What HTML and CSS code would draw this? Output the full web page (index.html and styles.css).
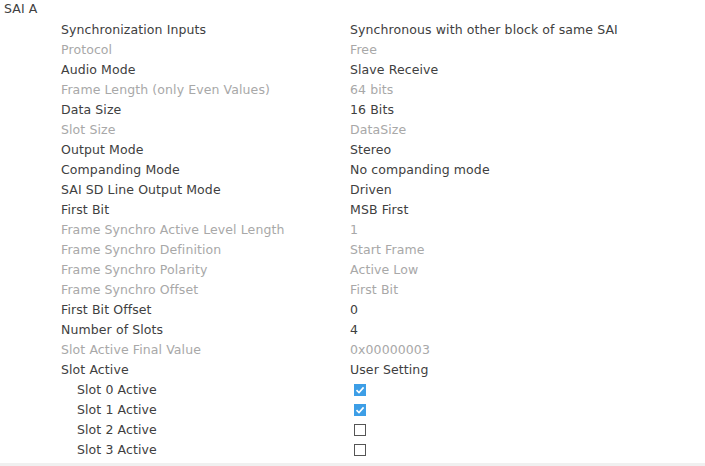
FILE: index.html
```html
<!DOCTYPE html>
<html>
<head>
<meta charset="utf-8">
<link rel="stylesheet" href="styles.css">
</head>
<body>
<div class="panel">
  <div class="group">SAI A</div>
  <div class="rows">
    <div class="row"><span class="label">Synchronization Inputs</span><span class="value">Synchronous with other block of same SAI</span></div>
    <div class="row off"><span class="label">Protocol</span><span class="value">Free</span></div>
    <div class="row"><span class="label">Audio Mode</span><span class="value">Slave Receive</span></div>
    <div class="row off"><span class="label">Frame Length (only Even Values)</span><span class="value">64 bits</span></div>
    <div class="row"><span class="label">Data Size</span><span class="value">16 Bits</span></div>
    <div class="row off"><span class="label">Slot Size</span><span class="value">DataSize</span></div>
    <div class="row"><span class="label">Output Mode</span><span class="value">Stereo</span></div>
    <div class="row"><span class="label">Companding Mode</span><span class="value">No companding mode</span></div>
    <div class="row"><span class="label">SAI SD Line Output Mode</span><span class="value">Driven</span></div>
    <div class="row"><span class="label">First Bit</span><span class="value">MSB First</span></div>
    <div class="row off"><span class="label">Frame Synchro Active Level Length</span><span class="value">1</span></div>
    <div class="row off"><span class="label">Frame Synchro Definition</span><span class="value">Start Frame</span></div>
    <div class="row off"><span class="label">Frame Synchro Polarity</span><span class="value">Active Low</span></div>
    <div class="row off"><span class="label">Frame Synchro Offset</span><span class="value">First Bit</span></div>
    <div class="row"><span class="label">First Bit Offset</span><span class="value">0</span></div>
    <div class="row"><span class="label">Number of Slots</span><span class="value">4</span></div>
    <div class="row off"><span class="label">Slot Active Final Value</span><span class="value">0x00000003</span></div>
    <div class="row"><span class="label">Slot Active</span><span class="value">User Setting</span></div>
    <div class="row sub"><span class="label">Slot 0 Active</span><span class="value"><span class="check on"><svg viewBox="0 0 12 12" width="12" height="12"><path d="M2.5 6.2 L5 8.6 L9.6 3.4" fill="none" stroke="#fff" stroke-width="1.6"/></svg></span></span></div>
    <div class="row sub"><span class="label">Slot 1 Active</span><span class="value"><span class="check on"><svg viewBox="0 0 12 12" width="12" height="12"><path d="M2.5 6.2 L5 8.6 L9.6 3.4" fill="none" stroke="#fff" stroke-width="1.6"/></svg></span></span></div>
    <div class="row sub"><span class="label">Slot 2 Active</span><span class="value"><span class="check"></span></span></div>
    <div class="row sub"><span class="label">Slot 3 Active</span><span class="value"><span class="check"></span></span></div>
  </div>
  <div class="foot"></div>
</div>
</body>
</html>
```
FILE: styles.css
```css
html, body {
  margin: 0;
  padding: 0;
  background: #fff;
}
body {
  font-family: "DejaVu Sans", sans-serif;
  font-size: 12.5px;
  letter-spacing: 0.1px;
  color: #404040;
}
.panel {
  width: 705px;
  height: 466px;
  display: flex;
  flex-direction: column;
}
.group {
  height: 20px;
  line-height: 18px;
  padding-left: 4px;
}
.rows {
  display: flex;
  flex-direction: column;
}
.row {
  display: grid;
  grid-template-columns: 289px 1fr;
  height: 20px;
  line-height: 20px;
  padding-left: 61px;
}
.row.sub {
  padding-left: 77px;
  grid-template-columns: 273px 1fr;
}
.row.off {
  color: #a8a8a8;
}
.value {
  display: flex;
  align-items: center;
}
.check {
  box-sizing: border-box;
  width: 12px;
  height: 12px;
  border: 1px solid #555;
  margin-left: 4px;
  display: flex;
  align-items: center;
  justify-content: center;
  background: #fff;
}
.check.on {
  border: none;
  background: #3d9ee6;
}
.check svg {
  display: block;
}
.foot {
  margin-top: auto;
  height: 3px;
  background: #f0f0f0;
}
```
